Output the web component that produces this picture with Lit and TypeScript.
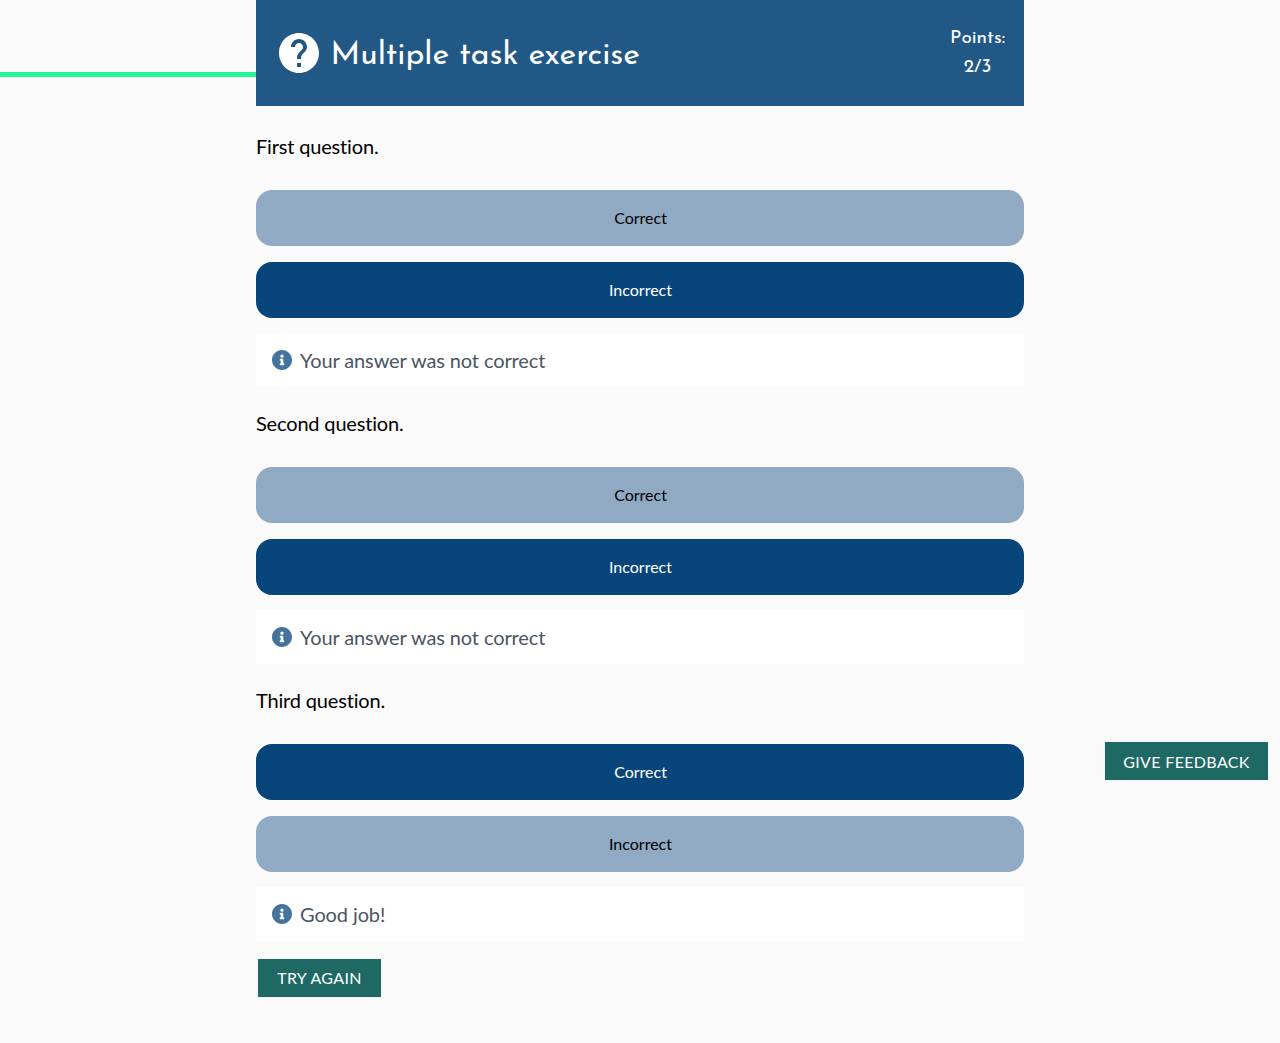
import { LitElement, html, css, svg } from "lit";
import { customElement } from "lit/decorators.js";

interface Task { title: string; selected: string; message: string; }

const tasks: Task[] = [
  { title: "First question.", selected: "Incorrect", message: "Your answer was not correct" },
  { title: "Second question.", selected: "Incorrect", message: "Your answer was not correct" },
  { title: "Third question.", selected: "Correct", message: "Good job!" },
];

@customElement("app-root")
export class AppRoot extends LitElement {
  static styles = css`
    :host { display: block; position: relative; box-sizing: border-box; height: 1043px; overflow: hidden;
      background: #fafafa; color: #000; font-family: Lato, sans-serif; font-variant-ligatures: none; }
    * { box-sizing: border-box; }
    .progress { position: absolute; left: 0; top: 72px; width: 256px; height: 5px; background: #26f596; }
    .main { width: 768px; margin: 0 auto; }
    .head { display: flex; align-items: center; height: 106px; padding: 0 19px 0 19px; background: #225886; color: #fff;
      font-family: "Josefin Sans", Lato, sans-serif; }
    .head svg { width: 48px; height: 48px; fill: #fff; flex: none; }
    h1 { margin: 0 0 0 7.5px; padding-top: 5px; font-size: 32px; font-weight: 400; line-height: 40px; flex: 1; white-space: nowrap; }
    .points { display: flex; flex-direction: column; align-items: center; font-size: 19px; line-height: 29px; padding-bottom: 1px; }
    .task { height: 277px; padding-top: 25px; }
    .title { margin: 0; font-size: 20px; line-height: 30px; height: 59px; letter-spacing: -0.17px; }
    .options { display: flex; flex-direction: column; gap: 16px; }
    .option { height: 56px; border: 0; border-radius: 16px; background: #91aac4; font: 16px Lato, sans-serif; color: #000; padding: 0 0 2px 1px; }
    .option.selected { background: #08457a; color: #fff; }
    .message { display: flex; align-items: center; gap: 8px; height: 54px; margin-top: 15px; padding: 0 16px;
      background: #fff; color: #4b5563; font-size: 20px; letter-spacing: -0.11px; }
    .message svg { width: 20px; height: 20px; fill: #44739e; }
    .btn { display: flex; align-items: center; justify-content: center; height: 38px; border: 0; padding: 0;
      background: #1f6964; color: #fff; font: 16px Lato, sans-serif; letter-spacing: 0.34px; box-shadow: 0 0 3px #0001; }
    .again { width: 123px; margin: 22px 0 0 2px; padding: 0 0 2px; }
    .feedback { position: absolute; left: 1105px; top: 742px; width: 163px; }
  `;

  private info = svg`<path d="M256 8C119 8 8 119 8 256s111 248 248 248 248-111 248-248S393 8 256 8zm0 110a42 42 0 1 1 0 84 42 42 0 0 1 0-84zm56 254a12 12 0 0 1-12 12h-88a12 12 0 0 1-12-12v-24a12 12 0 0 1 12-12h12v-64h-12a12 12 0 0 1-12-12v-24a12 12 0 0 1 12-12h64a12 12 0 0 1 12 12v100h12a12 12 0 0 1 12 12z"/>`;

  private renderTask(t: Task) {
    return html`<section class="task">
      <p class="title">${t.title}</p>
      <div class="options">
        ${["Correct", "Incorrect"].map(o => html`<button class="option ${o === t.selected ? "selected" : ""}">${o}</button>`)}
      </div>
      <div class="message"><svg viewBox="8 8 496 496">${this.info}</svg><span>${t.message}</span></div>
    </section>`;
  }

  render() {
    return html`
      <div class="progress"></div>
      <main class="main">
        <header class="head">
          <svg viewBox="0 0 24 24"><path d="M12 2C6.48 2 2 6.48 2 12s4.48 10 10 10 10-4.48 10-10S17.52 2 12 2zm1 17h-2v-2h2v2zm2.07-7.75l-.9.92C13.45 12.9 13 13.5 13 15h-2v-.5c0-1.1.45-2.1 1.17-2.83l1.24-1.26c.37-.36.59-.86.59-1.41 0-1.1-.9-2-2-2s-2 .9-2 2H8c0-2.21 1.79-4 4-4s4 1.79 4 4c0 .88-.36 1.68-.93 2.25z"/></svg>
          <h1>Multiple task exercise</h1>
          <div class="points"><span>Points:</span><span>2/3</span></div>
        </header>
        ${tasks.map(t => this.renderTask(t))}
        <button class="btn again">TRY AGAIN</button>
      </main>
      <button class="btn feedback">GIVE FEEDBACK</button>`;
  }
}
